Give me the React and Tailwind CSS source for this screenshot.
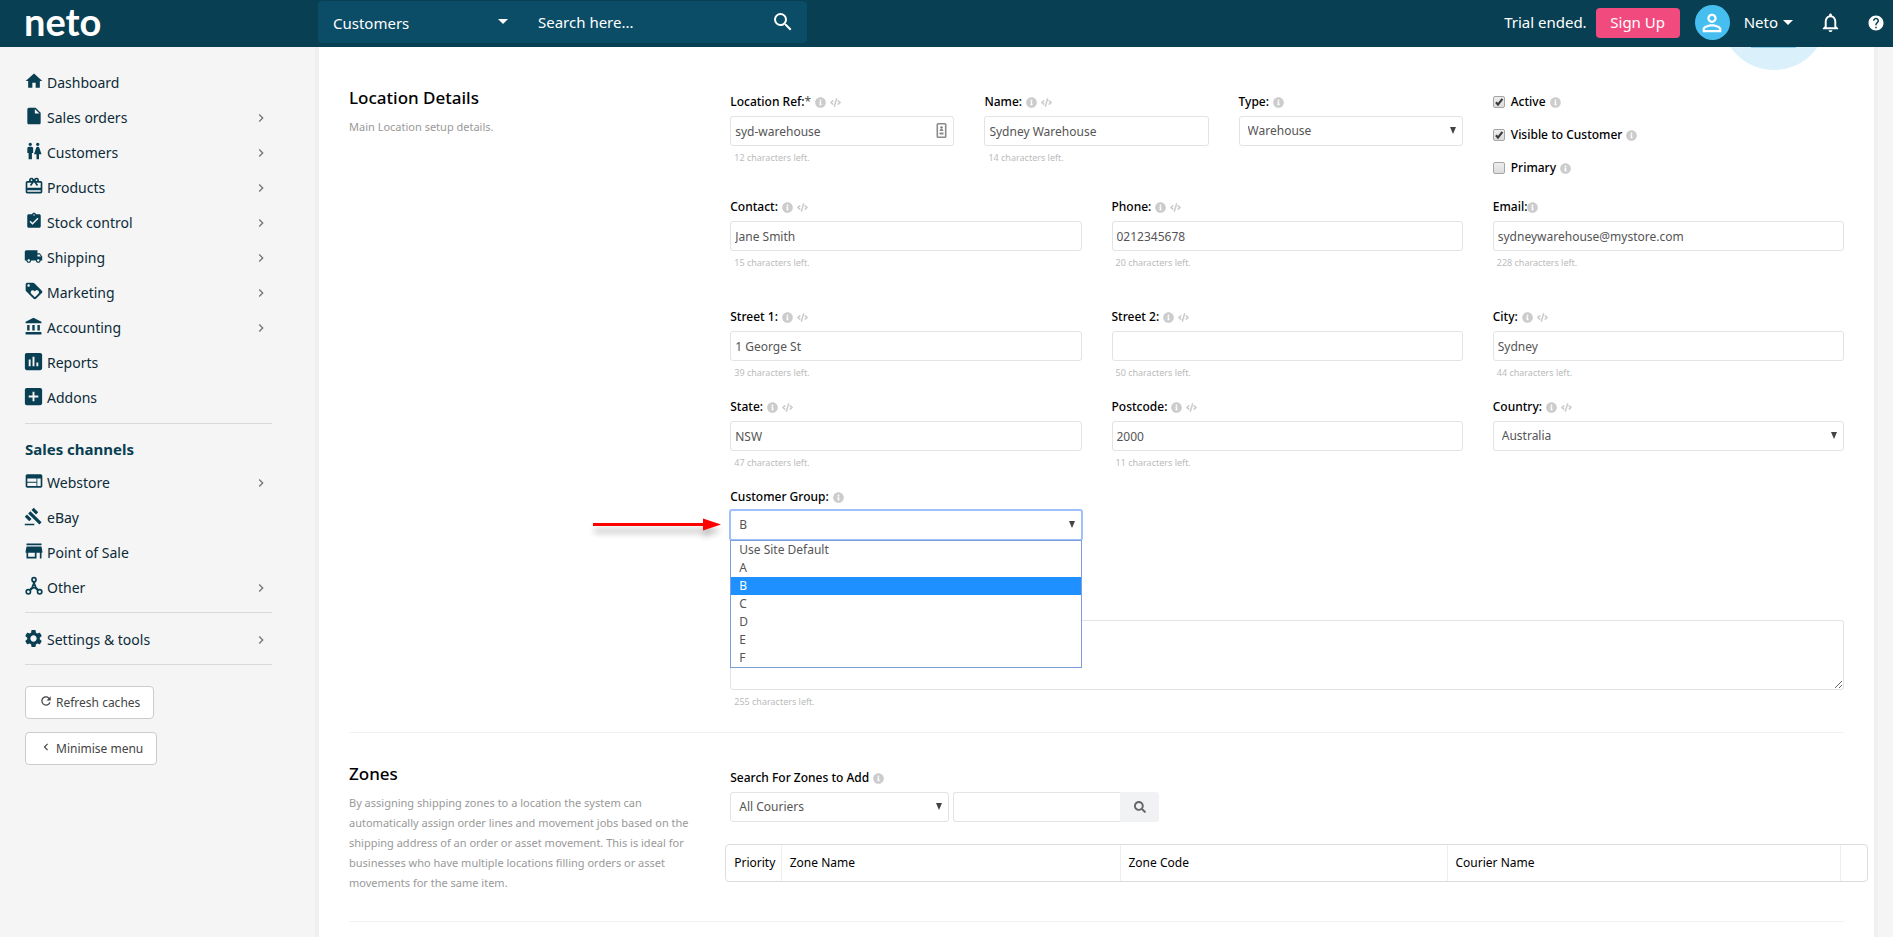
import React, { useState } from 'react';
import {
  MdHome,
  MdInsertDriveFile,
  MdWc,
  MdCardGiftcard,
  MdAssignmentTurnedIn,
  MdLocalShipping,
  MdLoyalty,
  MdAccountBalance,
  MdInsertChart,
  MdAddBox,
  MdWeb,
  MdGavel,
  MdSettings,
  MdRefresh,
  MdChevronLeft,
  MdChevronRight,
  MdNotificationsNone,
  MdHelp,
  MdPersonOutline,
  MdSearch,
} from 'react-icons/md';
import { FaInfoCircle, FaCode, FaSearch } from 'react-icons/fa';

function OtherIcon({ size, className }) {
  return (
    <svg viewBox="0 0 24 24" width={size} height={size} fill="none" stroke="currentColor" strokeWidth="2" className={className}>
      <circle cx="12" cy="4.4" r="2.4" />
      <circle cx="5.2" cy="19" r="2.6" />
      <circle cx="18.8" cy="19" r="2.6" />
      <circle cx="12" cy="12.4" r="1.8" />
      <path d="M12 6.8v4M10.6 13.6 7.2 16.8M13.4 13.6l3.4 3.2" strokeWidth="2.8" />
    </svg>
  );
}

function StoreIcon({ size, className }) {
  return (
    <svg viewBox="0 0 24 24" width={size} height={size} fill="currentColor" className={className}>
      <path d="M21 3H3v2h18zM22 12l-1-5.5H3L2 12v2h1v7h12v-7h4v7h2v-7h1zM13 19H5v-5h8z" fillRule="evenodd" />
    </svg>
  );
}

const mainLinks = [
  { name: 'Dashboard', icon: MdHome, size: 20 },
  { name: 'Sales orders', icon: MdInsertDriveFile, size: 20, sub: true },
  { name: 'Customers', icon: MdWc, size: 20, sub: true },
  { name: 'Products', icon: MdCardGiftcard, size: 20, sub: true },
  { name: 'Stock control', icon: MdAssignmentTurnedIn, size: 18, sub: true },
  { name: 'Shipping', icon: MdLocalShipping, size: 19, sub: true },
  { name: 'Marketing', icon: MdLoyalty, size: 20, sub: true },
  { name: 'Accounting', icon: MdAccountBalance, size: 19, sub: true },
  { name: 'Reports', icon: MdInsertChart, size: 23 },
  { name: 'Addons', icon: MdAddBox, size: 23 },
];

const channelLinks = [
  { name: 'Webstore', icon: MdWeb, size: 20, sub: true },
  { name: 'eBay', icon: MdGavel, size: 19 },
  { name: 'Point of Sale', icon: StoreIcon, size: 20 },
  { name: 'Other', icon: OtherIcon, size: 20, sub: true },
];

const customerGroups = ['Use Site Default', 'A', 'B', 'C', 'D', 'E', 'F'];

function NavLinks({ links }) {
  return (
    <ul>
      {links.map(({ name, icon: Icon, size, sub }) => (
        <li key={name}>
          <a href="#" className="flex h-[35px] items-center text-sm text-[#0c2b38]">
            <span className="mb-[3px] mr-[5px] flex w-[17px] justify-center text-[#083f52]">
              <Icon size={size} className="shrink-0" />
            </span>
            <span className="flex-1">{name}</span>
            {sub && <MdChevronRight className="mr-[3px] h-4 w-4 text-[#777]" />}
          </a>
        </li>
      ))}
    </ul>
  );
}

function Header() {
  return (
    <header className="relative z-10 flex h-[47px] items-center bg-[#083f52] text-white">
      <a href="#" className="w-[318px] shrink-0 pl-6 pb-[6px] font-['Lato',sans-serif] text-[38px] font-bold leading-none">
        neto
      </a>
      <div className="mb-[4px] flex h-[42px] w-[489px] items-center rounded bg-[#0b4c66]">
        <div className="relative w-[205px]">
          <select
            aria-label="Search in"
            defaultValue="Customers"
            className="w-full appearance-none bg-transparent pl-[15px] pt-[4px] text-[15px] outline-none"
          >
            <option>Customers</option>
          </select>
          <svg viewBox="0 0 10 5" className="pointer-events-none absolute right-[15px] top-[11px] h-[5px] w-[10px]" fill="currentColor">
            <path d="M0 0h10L5 5z" />
          </svg>
        </div>
        <input
          type="text"
          aria-label="Search"
          placeholder="Search here..."
          className="min-w-0 flex-1 bg-transparent pl-[15px] pt-[2px] text-[15px] outline-none placeholder:text-white"
        />
        <button aria-label="Search" className="mr-[12px]">
          <MdSearch className="h-6 w-6" />
        </button>
      </div>
      <div className="mb-[2px] ml-auto flex items-center text-[15px]">
        <span>Trial ended.</span>
        <a href="#" className="ml-[9px] flex h-[30px] w-[84px] items-center justify-center rounded bg-[#f14a7e]">
          Sign Up
        </a>
        <span className="ml-[15px] flex h-[35px] w-[35px] items-center justify-center rounded-full bg-[#46bff0]">
          <MdPersonOutline className="h-7 w-7" />
        </span>
        <button className="ml-[14px] flex items-center gap-[5px]">
          Neto
          <svg viewBox="0 0 10 5" className="h-[5px] w-[10px]" fill="currentColor">
            <path d="M0 0h10L5 5z" />
          </svg>
        </button>
        <button aria-label="Notifications" className="ml-[26px]">
          <MdNotificationsNone className="h-[23px] w-[23px]" />
        </button>
        <button aria-label="Help" className="ml-[25px] mr-[8px]">
          <MdHelp className="h-[18px] w-[18px]" />
        </button>
      </div>
    </header>
  );
}

function Sidebar() {
  return (
    <nav className="w-[319px] shrink-0 pl-[25px] pr-[47px] pt-[18px]">
      <NavLinks links={mainLinks} />
      <hr className="mt-[8px] border-[#d9d9d9]" />
      <h2 className="mb-[4px] mt-[13px] text-[15px] font-bold leading-6 text-[#083f52]">Sales channels</h2>
      <NavLinks links={channelLinks} />
      <hr className="mb-[9px] mt-[7px] border-[#d9d9d9]" />
      <NavLinks links={[{ name: 'Settings & tools', icon: MdSettings, size: 21, sub: true }]} />
      <hr className="mb-[21px] mt-[7px] border-[#d9d9d9]" />
      <div className="flex flex-col items-start gap-[13px] text-xs text-[#444]">
        <button className="flex h-[33px] items-center gap-[3px] rounded border border-[#ccc] bg-white px-[13px]">
          <MdRefresh className="mb-[3px] h-[14px] w-[14px]" />
          Refresh caches
        </button>
        <button className="flex h-[33px] items-center gap-[3px] rounded border border-[#ccc] bg-white px-[13px]">
          <MdChevronLeft className="mb-[3px] h-[14px] w-[14px]" />
          Minimise menu
        </button>
      </div>
    </nav>
  );
}

function Info() {
  return <FaInfoCircle className="h-[11px] w-[11px] text-[#ccc]" />;
}

function Label({ id, text, required, code, tight }) {
  return (
    <div className={tight ? 'flex items-center text-xs leading-5' : 'flex items-center gap-1 text-xs leading-5'}>
      <label htmlFor={id} className="font-medium text-black">
        {text}
        {required && <span className="font-normal text-[#555]">*</span>}
      </label>
      <Info />
      {code && <FaCode className="h-[11px] w-[11px] text-[#ccc]" />}
    </div>
  );
}

function Hint({ left }) {
  return <p className="pl-[4px] text-[9px] leading-4 text-[#bbb]">{left} characters left.</p>;
}

function TextField({ id, label, value, left, required, tight, card }) {
  return (
    <div className="flex flex-col gap-1">
      <Label id={id} text={label} required={required} code={!tight} tight={tight} />
      <div className="relative">
        <input
          id={id}
          type="text"
          defaultValue={value}
          className="block h-[30px] w-full rounded-[3px] border border-[#e3e3e3] bg-white px-[4px] text-xs text-[#555] outline-none"
        />
        {card && (
          <svg viewBox="0 0 10 15" className="pointer-events-none absolute right-[7px] top-[7px] h-[15px] w-[11px]">
            <rect x="0.8" y="0.8" width="8.4" height="13.4" rx="0.8" fill="#fff" stroke="#8a8a8a" strokeWidth="1.6" />
            <circle cx="5" cy="4.4" r="1.2" fill="#777" />
            <path d="M3.2 8V7l1.2-1.2h1.2L6.8 7v1zM3 9.4h4v2.2H3z" fill="#888" />
          </svg>
        )}
      </div>
      <Hint left={left} />
    </div>
  );
}

function Arrow() {
  return (
    <svg viewBox="0 0 6 7" className="pointer-events-none absolute right-[7px] top-[11px] h-[7px] w-[6px]" fill="#444">
      <path d="M0 0h6L3 7z" />
    </svg>
  );
}

function SelectBox({ id, options, value, onChange, focused }) {
  return (
    <div className="relative">
      <select
        id={id}
        value={value}
        onChange={onChange}
        className={
          focused
            ? 'block h-[30px] w-full appearance-none rounded-[2px] border border-[#a0c0fb] bg-white px-[8px] text-xs text-[#555] shadow-[0_0_0_1px_#a0c0fb] outline-none'
            : 'block h-[30px] w-full appearance-none rounded-[3px] border border-[#e3e3e3] bg-white px-[8px] text-xs text-[#555] outline-none'
        }
      >
        {options.map((option) => (
          <option key={option}>{option}</option>
        ))}
      </select>
      <Arrow />
    </div>
  );
}

function CheckField({ id, label, checked }) {
  return (
    <div className="flex items-center gap-1 text-xs leading-5">
      <span className="relative mr-[2px] h-3 w-3">
        <input
          id={id}
          type="checkbox"
          defaultChecked={checked}
          className="peer block h-3 w-3 appearance-none rounded-[2px] border border-[#a5a5a5] bg-linear-to-b from-[#eee] to-[#dcdcdc]"
        />
        <svg viewBox="0 0 12 12" className="pointer-events-none absolute inset-0 hidden h-3 w-3 peer-checked:block" fill="none">
          <path d="M3 6.2 5 8.6 9.4 2.8" stroke="#3c3c3c" strokeWidth="2.2" />
        </svg>
      </span>
      <label htmlFor={id} className="font-medium text-black">
        {label}
      </label>
      <Info />
    </div>
  );
}

function CustomerGroup() {
  const [group, setGroup] = useState('B');

  return (
    <div className="flex flex-col gap-[3px]">
      <Label id="customer-group" text="Customer Group:" />
      <div className="relative">
        <SelectBox
          id="customer-group"
          options={customerGroups}
          value={group}
          onChange={(e) => setGroup(e.target.value)}
          focused
        />
        <ul className="absolute inset-x-0 top-[30px] z-10 border border-[#7c9fdc] bg-white text-xs leading-[18px] text-[#555]">
          {customerGroups.map((name) => (
            <li
              key={name}
              onClick={() => setGroup(name)}
              className={name === group ? 'bg-[#1e90ff] px-[8px] text-white' : 'px-[8px]'}
            >
              {name}
            </li>
          ))}
        </ul>
        <svg viewBox="0 0 136 30" className="absolute right-full top-[3px] mr-[4px] h-[30px] w-[136px] overflow-visible">
          <g fill="#000" opacity="0.25" className="blur-[3px]">
            <path d="M4 16h110v4H4zM113 12l18 6-18 6z" />
          </g>
          <path d="M3 10h110v3H3zM113 5.5l18 6-18 6z" fill="#f00" />
        </svg>
      </div>
    </div>
  );
}

function Section({ title, description, children }) {
  return (
    <section className="grid grid-cols-4 gap-x-[30px]">
      <div>
        <h2 className="text-[17px] font-medium leading-6 text-black">{title}</h2>
        <p className="mt-[7px] text-[11px] leading-5 text-[#999]">{description}</p>
      </div>
      <div className="col-span-3 pt-[6px]">{children}</div>
    </section>
  );
}

export default function App() {
  const [type, setType] = useState('Warehouse');
  const [country, setCountry] = useState('Australia');
  const [courier, setCourier] = useState('All Couriers');

  return (
    <div className="flex min-h-screen flex-col bg-[#f5f5f5] font-['Noto_Sans','Open_Sans',sans-serif]">
      <Header />
      <div className="flex flex-1">
        <Sidebar />
        <main className="relative mr-[19px] min-w-0 flex-1 bg-white px-[30px] pt-[39px] shadow-[0_0_0_4px_#f0f0f0]">
          <div className="absolute right-[47px] top-0 h-[23px] w-[106px] overflow-hidden">
            <svg viewBox="0 83 106 23" className="h-[23px] w-[106px]">
              <circle cx="53" cy="53" r="53" fill="#daf1fc" />
              <path d="M30 83h45v1H30z" fill="#8fcfee" />
            </svg>
          </div>

          <Section title="Location Details" description="Main Location setup details.">
            <div className="grid grid-cols-3 gap-x-[30px]">
              <div className="col-span-2 mb-[31px] grid grid-cols-3 gap-x-[30px]">
                <TextField id="location-ref" label="Location Ref:" value="syd-warehouse" left={12} required card />
                <TextField id="name" label="Name:" value="Sydney Warehouse" left={14} />
                <div className="flex flex-col gap-1">
                  <Label id="type" text="Type:" />
                  <SelectBox id="type" options={['Warehouse']} value={type} onChange={(e) => setType(e.target.value)} />
                </div>
              </div>
              <div className="flex flex-col gap-[13px]">
                <CheckField id="active" label="Active" checked />
                <CheckField id="visible" label="Visible to Customer" checked />
                <CheckField id="primary" label="Primary" />
              </div>
            </div>
            <div className="mb-[36px] grid grid-cols-3 gap-x-[30px]">
              <TextField id="contact" label="Contact:" value="Jane Smith" left={15} />
              <TextField id="phone" label="Phone:" value="0212345678" left={20} />
              <TextField id="email" label="Email:" value="sydneywarehouse@mystore.com" left={228} tight />
            </div>
            <div className="grid grid-cols-3 gap-x-[30px] gap-y-4">
              <TextField id="street1" label="Street 1:" value="1 George St" left={39} />
              <TextField id="street2" label="Street 2:" value="" left={50} />
              <TextField id="city" label="City:" value="Sydney" left={44} />
              <TextField id="state" label="State:" value="NSW" left={47} />
              <TextField id="postcode" label="Postcode:" value="2000" left={11} />
              <div className="flex flex-col gap-1">
                <Label id="country" text="Country:" code />
                <SelectBox id="country" options={['Australia']} value={country} onChange={(e) => setCountry(e.target.value)} />
              </div>
              <CustomerGroup />
            </div>
            <textarea
              aria-label="Notes"
              className="mb-[4px] mt-[80px] block h-[70px] w-full resize rounded-[3px] border border-[#e3e3e3] bg-white p-[5px] text-xs text-[#555] outline-none"
            />
            <Hint left={255} />
          </Section>

          <hr className="mb-[29px] mt-[22px] border-[#f2f2f2]" />

          <Section
            title="Zones"
            description="By assigning shipping zones to a location the system can automatically assign order lines and movement jobs based on the shipping address of an order or asset movement. This is ideal for businesses who have multiple locations filling orders or asset movements for the same item."
          >
            <Label id="couriers" text="Search For Zones to Add" />
            <div className="mt-[4px] flex">
              <div className="mr-[4px] w-[219px]">
                <SelectBox id="couriers" options={['All Couriers']} value={courier} onChange={(e) => setCourier(e.target.value)} />
              </div>
              <input
                type="text"
                aria-label="Zone search"
                className="h-[30px] w-[167px] rounded-l-[3px] border border-r-0 border-[#e3e3e3] bg-white px-[5px] text-xs outline-none"
              />
              <button aria-label="Search zones" className="flex h-[30px] w-[39px] items-center justify-center rounded-r-[3px] bg-[#f1f2f4]">
                <FaSearch className="h-3 w-3 text-[#666]" />
              </button>
            </div>
            <div className="-ml-[5px] -mr-[24px] mt-[22px] overflow-hidden rounded border border-[#ddd]">
              <table className="w-full table-fixed text-left text-xs text-black">
                <thead>
                  <tr className="h-[36px] divide-x divide-[#eee]">
                    <th className="w-[55px] pl-[8px] font-normal">Priority</th>
                    <th className="pl-[8px] font-normal">Zone Name</th>
                    <th className="w-[327px] pl-[8px] font-normal">Zone Code</th>
                    <th className="w-[393px] pl-[8px] font-normal">Courier Name</th>
                    <td className="w-[27px]"></td>
                  </tr>
                </thead>
              </table>
            </div>
          </Section>

          <hr className="mt-[28px] border-[#f2f2f2]" />
        </main>
      </div>
    </div>
  );
}
